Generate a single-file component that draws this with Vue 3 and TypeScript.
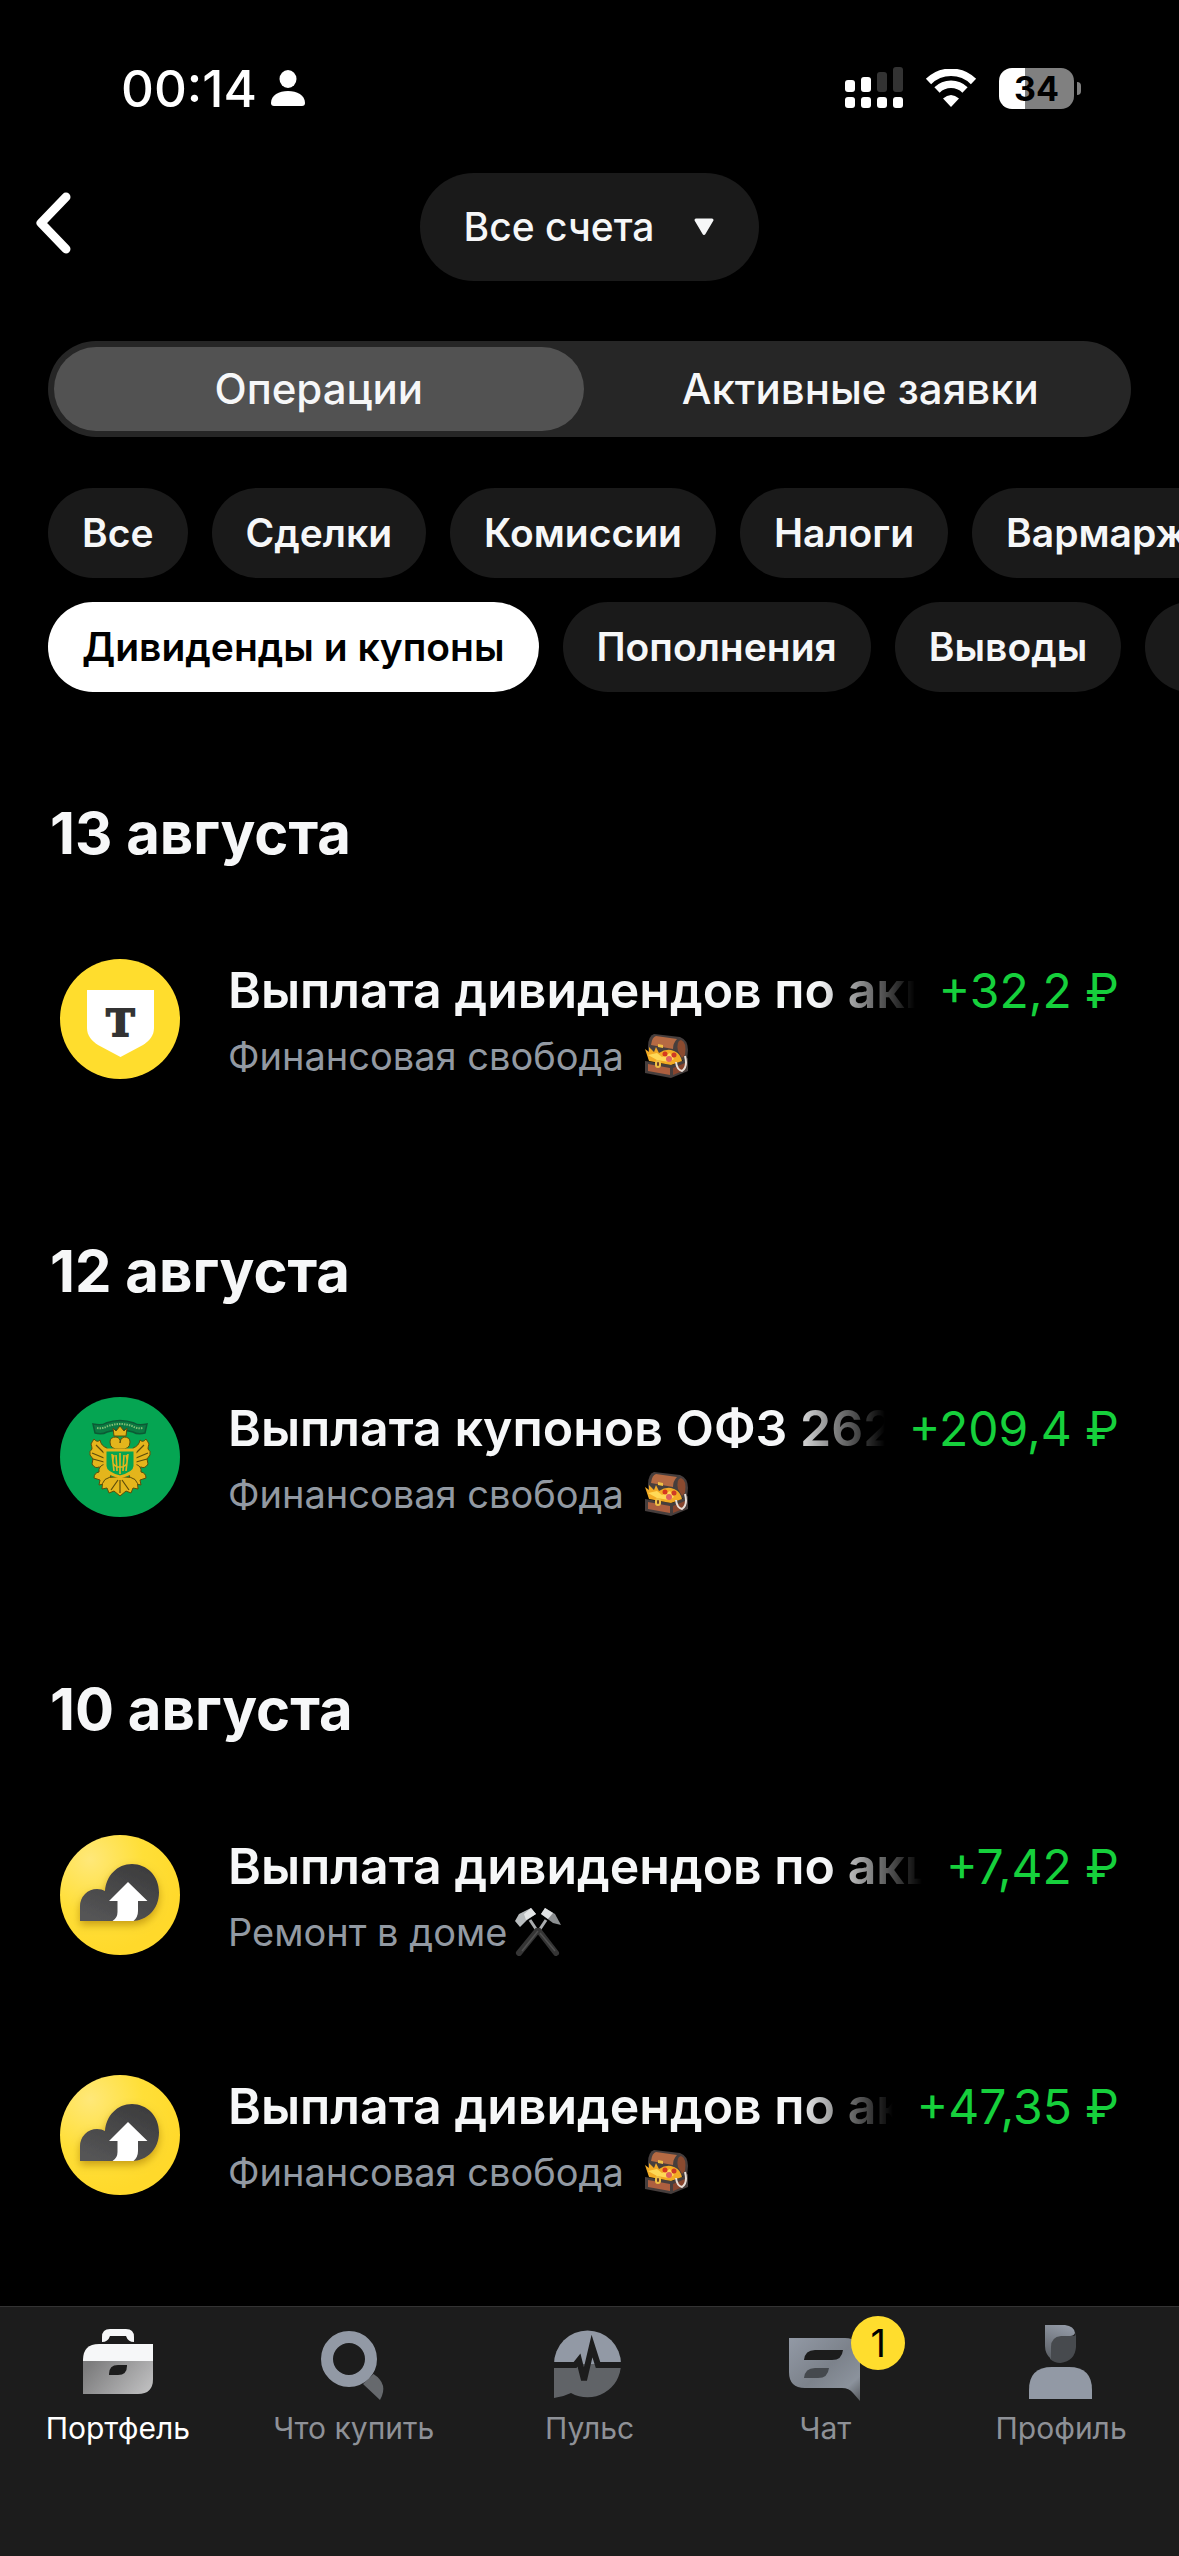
<script setup lang="ts">
import { ref } from 'vue'

type Logo = 'tbank' | 'minfin' | 'cloud'
type Emoji = 'chest' | 'hammers'

interface Operation {
  logo: Logo
  title: string
  account: string
  emoji: Emoji
  amount: string
}

interface Day {
  date: string
  operations: Operation[]
}

const segments = ['Операции', 'Активные заявки']
const activeSegment = ref(segments[0])

const filterRows = [
  ['Все', 'Сделки', 'Комиссии', 'Налоги', 'Вармарж'],
  ['Дивиденды и купоны', 'Пополнения', 'Выводы', ''],
]
const activeFilter = ref('Дивиденды и купоны')

const days: Day[] = [
  {
    date: '13 августа',
    operations: [
      { logo: 'tbank', title: 'Выплата дивидендов по акц', account: 'Финансовая свобода', emoji: 'chest', amount: '+32,2 ₽' },
    ],
  },
  {
    date: '12 августа',
    operations: [
      { logo: 'minfin', title: 'Выплата купонов ОФЗ 262', account: 'Финансовая свобода', emoji: 'chest', amount: '+209,4 ₽' },
    ],
  },
  {
    date: '10 августа',
    operations: [
      { logo: 'cloud', title: 'Выплата дивидендов по акц', account: 'Ремонт в доме', emoji: 'hammers', amount: '+7,42 ₽' },
      { logo: 'cloud', title: 'Выплата дивидендов по ак', account: 'Финансовая свобода', emoji: 'chest', amount: '+47,35 ₽' },
    ],
  },
]
</script>

<template>
  <div class="page">
    <div class="status">
      <div class="status-left">
        <time>00:14</time>
        <svg width="34" height="38" viewBox="0 0 34 38" aria-hidden="true">
          <ellipse cx="17" cy="10" rx="8.5" ry="9" fill="#fff" />
          <path d="M0 34C0 26 8 22 17 22s17 4 17 12q0 3-3 3H3q-3 0-3-3Z" fill="#fff" />
        </svg>
      </div>
      <div class="status-right">
        <svg width="58" height="42" viewBox="0 0 58 42" fill="#fff" aria-hidden="true">
          <rect x="0" y="13" width="10" height="12" rx="3" />
          <rect x="16" y="10" width="10" height="15" rx="3" />
          <rect x="32" y="5" width="10" height="20" rx="3" fill="#333" />
          <rect x="48" y="0" width="10" height="25" rx="3" fill="#333" />
          <rect x="0" y="30" width="10" height="11" rx="3" />
          <rect x="16" y="30" width="10" height="11" rx="3" />
          <rect x="32" y="30" width="10" height="11" rx="3" />
          <rect x="48" y="30" width="10" height="11" rx="3" />
        </svg>
        <svg class="wifi" width="52" height="38" viewBox="0 0 52 38" aria-hidden="true">
          <path d="M3.500 12.500a32 32 0 0 1 45 0" fill="none" stroke="#fff" stroke-width="7.500" />
          <path d="M12 21a20 20 0 0 1 28 0" fill="none" stroke="#fff" stroke-width="7.500" />
          <path d="M26 38l-8-8.500q8-7 16 0Z" fill="#fff" />
        </svg>
        <div class="battery"><span class="battery-level">34</span><i class="battery-tip"></i></div>
      </div>
    </div>

    <header class="header">
      <button class="back" type="button" aria-label="Назад">
        <svg width="36" height="62" viewBox="0 0 36 62" aria-hidden="true">
          <path d="M30 5 5 31l25 26" fill="none" stroke="#fff" stroke-width="9" stroke-linecap="round" stroke-linejoin="round" />
        </svg>
      </button>
      <button class="account" type="button">
        Все счета
        <svg width="22" height="18" viewBox="0 0 22 18" aria-hidden="true">
          <path d="M3 2h16L11 15.500Z" fill="#f6f7f8" stroke="#f6f7f8" stroke-width="3" stroke-linejoin="round" />
        </svg>
      </button>
    </header>

    <main>
      <div class="segments">
        <button
          v-for="segment in segments"
          :key="segment"
          type="button"
          class="segment"
          :class="{ active: segment === activeSegment }"
          :aria-pressed="segment === activeSegment"
          @click="activeSegment = segment"
        >{{ segment }}</button>
      </div>

      <div class="filters">
        <div v-for="(row, index) in filterRows" :key="index" class="filter-row">
          <button
            v-for="filter in row"
            :key="filter"
            type="button"
            class="chip"
            :class="{ active: filter === activeFilter }"
            :aria-pressed="filter === activeFilter"
            :aria-label="filter || 'Ещё'"
            @click="activeFilter = filter"
          >{{ filter }}</button>
        </div>
      </div>

      <div class="days">
        <section v-for="day in days" :key="day.date">
          <h2>{{ day.date }}</h2>
          <ul>
            <li v-for="operation in day.operations" :key="operation.amount" class="operation">
              <svg v-if="operation.logo === 'tbank'" class="logo" viewBox="0 0 120 120" aria-hidden="true">
                <circle cx="60" cy="60" r="60" fill="#ffdd2d" />
                <path d="M27 31h67v38c0 8-5 13-11 17L60.500 98 38 86c-6-4-11-9-11-17Z" fill="#fff" />
                <text x="60.500" y="77" class="logo-letter" text-anchor="middle">Т</text>
              </svg>

              <svg v-else-if="operation.logo === 'minfin'" class="logo" viewBox="0 0 120 120" aria-hidden="true">
                <circle cx="60" cy="60" r="60" fill="#05a552" />
                <path d="M33 27q9 2 13-1 14-5 28 0 4 3 13 1l-2 9q-7 2-12-1-13-4-26 0-5 3-12 1Z" fill="#0b7a42" stroke="#0c5a35" stroke-width="1.500" />
                <path d="M37 31q6 1 11-2 12-4 24 0 5 3 11 2" fill="none" stroke="#7dbb72" stroke-width="2" stroke-dasharray="1.500 1" />
                <g fill="#e4b51c" stroke="#5c4d0b" stroke-width="1">
                  <path d="M53 31l3 3 4-5 4 5 3-3-1 8H54Z" />
                  <path d="M60 52q-10 1-10-7 0-5 6-5 5 1 4 6 0-5 4-6 6 0 6 5 0 8-10 7Z" />
                  <path d="M47 51q-6-2-7-8-3 3-6-1-2 3-3 5 1 3 1 5-3 2-2 6l3 4-1 5q3 5 7 3l6 2Z" />
                  <path d="M73 51q6-2 7-8 3 3 6-1 2 3 3 5-1 3-1 5 3 2 2 6l-3 4 1 5q-3 5-7 3l-6 2Z" />
                  <path d="M45 67q-7 2-6 8-5 1-5 6l6 2-1 5 9-2 3-8Z" />
                  <path d="M75 67q7 2 6 8 5 1 5 6l-6 2 1 5-9-2-3-8Z" />
                  <path d="M56 80q-15-1-14 12l5-1 2 5 5-2 6 5 6-5 5 2 2-5 5 1q1-13-14-12Z" />
                </g>
                <path d="M32 56l12 5M33 62l11 3M36 48l8 8M88 56l-12 5M87 62l-11 3M84 48l-8 8M60 96V83M51 93l7-10M69 93l-7-10" stroke="#5c4d0b" stroke-width="1.200" />
                <path d="M45 53h30v16q0 7-15 11-15-4-15-11Z" fill="#05a552" stroke="#e4b51c" stroke-width="3" />
                <path d="M60 56v21M54 74l-2-17M66 74l2-17M54 58q-4 12 6 12 10 0 6-12M57 74l-1-16M63 74l1-16" fill="none" stroke="#e4b51c" stroke-width="1.600" />
              </svg>

              <svg v-else class="logo" viewBox="0 0 120 120" aria-hidden="true">
                <defs>
                  <radialGradient id="cloud-bg" cx="0.25" cy="0.2" r="0.8">
                    <stop offset="0" stop-color="#ffe879" />
                    <stop offset="0.55" stop-color="#ffdf38" />
                    <stop offset="1" stop-color="#ffd92b" />
                  </radialGradient>
                  <linearGradient id="cloud-fill" x1="0.8" y1="0" x2="0.2" y2="1">
                    <stop offset="0" stop-color="#3c3c3d" />
                    <stop offset="1" stop-color="#555556" />
                  </linearGradient>
                  <filter id="cloud-shadow" x="-20%" y="-20%" width="140%" height="150%">
                    <feDropShadow dx="0" dy="4" stdDeviation="4" flood-color="#a27500" flood-opacity="0.6" />
                  </filter>
                </defs>
                <circle cx="60" cy="60" r="60" fill="url(#cloud-bg)" />
                <path d="M20 86V71a17 17 0 0 1 17-17q5 0 8 2c1-15 12-27 27-27 15 0 27 12 27 28.500S87 86 72 86Z" fill="url(#cloud-fill)" filter="url(#cloud-shadow)" />
                <path d="M68 47l19.500 19H78v10q0 6-4.500 10h-21q5-3 5-9V66H49Z" fill="#fff" />
              </svg>

              <div class="details">
                <div class="summary">
                  <span class="title">{{ operation.title }}</span>
                  <span class="amount">{{ operation.amount }}</span>
                </div>
                <div class="account-name">
                  {{ operation.account }}
                  <svg v-if="operation.emoji === 'chest'" class="chest" viewBox="0 0 44 44" role="img" aria-label="Сундук">
                    <path d="M3 13Q3 2 9 0l26 3q8 3 8 13l-1 10H4Z" fill="#463e3d" />
                    <path d="M6 11q1-8 5-9l21 3q-4 4-4 10Z" fill="#b56a43" />
                    <path d="M33 17q-2-10 3-11 6 2 4 15l-3 3Z" fill="#8a4a2f" />
                    <path d="M0 27l27 4 16-7v13l-17 7-26-5Z" fill="#463e3d" />
                    <path d="M3 30l22 4v7L3 37Z" fill="#ad5f3f" />
                    <path d="M28 34l12-5v7l-12 5Z" fill="#87452e" />
                    <path d="M0 15l4 3 0-5 5 5 2-5 3 6q6-4 12-3 8 2 10 8l1 3-11 4-22-4Z" fill="#f3ab25" />
                    <path d="M3 21l9-2 5 4 8-4 4 6-5 3-12-2Z" fill="#ffd957" />
                    <circle cx="20" cy="20" r="2.500" fill="#d7381e" />
                    <circle cx="29" cy="21" r="2.500" fill="#cf3a25" />
                    <circle cx="24" cy="25" r="3" fill="#e0625f" />
                    <path d="M40 22q3 11-3 15-5-1-6-9" fill="none" stroke="#e8dfd8" stroke-width="2" />
                    <rect x="11" y="27" width="4" height="6" rx="2" fill="#6b3d28" stroke="#efc045" stroke-width="2" />
                    <path d="M13 10l5 1v3l-5-1Z" fill="#efc045" />
                  </svg>
                  <svg v-else class="hammers" viewBox="0 0 48 48" role="img" aria-label="Молоты">
                    <path d="M16 12l8 12M32 12l-8 12" stroke="#a9acae" stroke-width="3" />
                    <path d="M23 23 5 45M25 23l17 22" stroke="#353535" stroke-width="6" stroke-linecap="round" />
                    <path d="M24 23 8 43M26 25l15 18" stroke="#505050" stroke-width="1.500" />
                    <path d="M17 0l5 6-9 6-7 7-5-6 4-7Z" fill="#b8bcbe" />
                    <path d="M17 0l5 6-10 6-2-6Z" fill="#e3e5e6" />
                    <path d="M31 0l10 6 6 11-8-2-12-9Z" fill="#8c8f91" />
                    <path d="M31 0l8 5-5 6-7-5Z" fill="#e0e2e3" />
                  </svg>
                </div>
              </div>
            </li>
          </ul>
        </section>
      </div>
    </main>

    <nav class="tabs">
      <a href="#portfolio" class="tab current" aria-current="page">
        <svg class="tab-icon" viewBox="0 0 72 78" aria-hidden="true">
          <defs>
            <linearGradient id="case-fill" x1="0" y1="0.3" x2="1" y2="0.7">
              <stop offset="0" stop-color="#7c7c7d" />
              <stop offset="1" stop-color="#bdbdbe" />
            </linearGradient>
          </defs>
          <path d="M20 18v-5q0-8 8-8h16q8 0 8 8v5q-6 0-8-6H28q-2 6-8 6Z" fill="#f6f7f8" />
          <path d="M1 37v-1Q1 20 17 20h54v17Z" fill="#f6f7f8" />
          <path d="M1 37h70v18q0 15-15 15H1Z" fill="url(#case-fill)" />
          <path d="M27 51v-1q0-9 9-9h9v1q0 9-9 9Z" fill="#1c1c1c" />
        </svg>
        Портфель
      </a>
      <a href="#buy" class="tab">
        <svg class="tab-icon" viewBox="0 0 72 78" aria-hidden="true">
          <path d="M45 60 55.500 50Q71 60 62 76Z" fill="#66696d" />
          <circle cx="31" cy="35" r="22" fill="none" stroke="#9299a5" stroke-width="12" />
        </svg>
        Что купить
      </a>
      <a href="#pulse" class="tab">
        <svg class="tab-icon" viewBox="0 0 72 78" aria-hidden="true">
          <path d="M1 40a33.500 33.500 0 0 1 67 0Z" fill="#9299a5" />
          <path d="M1 40h67a33.500 33.500 0 0 1-50 29q-8 4-17 5Z" fill="#606367" />
          <path d="M0 41h22l4-5 5 20 8-34 6 19h25" fill="none" stroke="#1c1c1c" stroke-width="6" />
        </svg>
        Пульс
      </a>
      <a href="#chat" class="tab">
        <span class="badge-anchor">
          <svg class="tab-icon" viewBox="0 0 72 78" aria-hidden="true">
            <defs>
              <linearGradient id="chat-fill" x1="0" y1="0" x2="1" y2="1">
                <stop offset="0" stop-color="#9299a5" />
                <stop offset="0.5" stop-color="#7c828b" />
                <stop offset="0.8" stop-color="#8b929c" />
                <stop offset="1" stop-color="#55585c" />
              </linearGradient>
            </defs>
            <path d="M0 14h56q15 0 15 15v48l-7-8q-4-5-11-5H16Q0 64 0 48Z" fill="url(#chat-fill)" />
            <path d="M15 36q1-10 11-10h28q-1 10-11 10Z" fill="#1c1c1c" />
            <path d="M15 54q1-10 11-10h14q-1 10-11 10Z" fill="#45494e" />
          </svg>
          <span class="badge">1</span>
        </span>
        Чат
      </a>
      <a href="#profile" class="tab">
        <svg class="tab-icon" viewBox="0 0 72 78" aria-hidden="true">
          <defs>
            <linearGradient id="hair-fill" x1="0.6" y1="0" x2="0.3" y2="1">
              <stop offset="0" stop-color="#9299a5" />
              <stop offset="1" stop-color="#5c6066" />
            </linearGradient>
          </defs>
          <path d="M25 35V17q2-5 8-5h16q2-1 2-4v15q-1 14-15.500 16-6 0-10.500-4Z" fill="#474a4e" />
          <path d="M20 1h20q9 1 10 8-1 3-5 3H36q-10 1-10 11v12q-6-5-6-13Z" fill="url(#hair-fill)" />
          <path d="M4 75V66Q4 43 27 43h17q23 0 23 23v9Z" fill="#9299a5" />
        </svg>
        Профиль
      </a>
    </nav>
  </div>
</template>

<style>
body {
  margin: 0;
  background: #000;
}
</style>

<style scoped>
.page {
  display: flex;
  flex-direction: column;
  min-height: 100vh;
  overflow: hidden;
  background: #000;
  color: #f6f7f8;
  font-family: Inter, 'Noto Sans', sans-serif;
}

svg {
  display: block;
  flex: none;
}

button {
  padding: 0;
  border: 0;
  background: none;
  color: inherit;
  font: inherit;
}

.status {
  display: flex;
  justify-content: space-between;
  padding: 56px 98px 53px 121px;
}

.status-left,
.status-right {
  display: flex;
  align-items: center;
  height: 64px;
}

.status-left {
  gap: 14px;
  color: #fff;
  font-size: 51px;
  font-weight: 500;
}

.status-right {
  gap: 22px;
}

.battery {
  display: flex;
  align-items: center;
  gap: 3px;
}

.battery-level {
  width: 75px;
  border-radius: 13px;
  background: linear-gradient(to right, #fff 26px, #808080 26px);
  color: #000;
  font-size: 34px;
  font-weight: 700;
  line-height: 41px;
  text-align: center;
}

.battery-tip {
  width: 4px;
  height: 13px;
  border-radius: 0 4px 4px 0;
  background: #808080;
}

.header {
  display: grid;
  grid-template-columns: 1fr auto 1fr;
  align-items: center;
  padding: 0 36px;
}

.back {
  justify-self: start;
  padding-bottom: 8px;
}

.account {
  display: flex;
  align-items: center;
  gap: 39px;
  padding: 0 44px;
  border-radius: 54px;
  background: #1a1a1a;
  font-size: 39px;
  font-weight: 500;
  line-height: 108px;
}

.segments {
  display: grid;
  grid-template-columns: 1fr 1fr;
  margin: 60px 48px 0;
  padding: 6px 0;
  border-radius: 48px;
  background: #262626;
}

.segment {
  margin: 0 6px;
  border-radius: 42px;
  font-size: 42px;
  font-weight: 500;
  line-height: 84px;
}

.segment.active {
  background: #525252;
}

.filters {
  display: grid;
  grid-template-columns: minmax(0, 1fr);
  gap: 24px;
  margin-top: 51px;
  padding-left: 48px;
}

.filter-row {
  display: flex;
  gap: 24px;
  overflow: hidden;
}

.chip {
  flex: none;
  min-width: 90px;
  padding: 0 34px;
  border-radius: 45px;
  background: #1a1a1a;
  font-size: 39px;
  font-weight: 600;
  line-height: 90px;
}

.chip.active {
  background: #fff;
  color: #000;
}

.days {
  display: grid;
  grid-template-columns: minmax(0, 1fr);
  gap: 96px;
  margin-top: 105px;
}

h2 {
  margin: 0 50px 30px;
  font-size: 58px;
  font-weight: 700;
  line-height: 72px;
}

ul {
  margin: 0;
  padding: 0;
  list-style: none;
}

.operation {
  display: flex;
  align-items: center;
  gap: 48px;
  height: 240px;
  padding: 0 60px;
}

.logo {
  width: 120px;
  height: 120px;
}

.logo-letter {
  fill: #333;
  stroke: #333;
  stroke-width: 2px;
  font-family: 'DejaVu Serif', serif;
  font-size: 38px;
  font-weight: 700;
}

.details {
  flex: 1;
  min-width: 0;
  padding-top: 2px;
}

.summary {
  display: flex;
  align-items: baseline;
  gap: 24px;
  margin-bottom: 10px;
  line-height: 60px;
  white-space: nowrap;
}

.title {
  flex: 1;
  min-width: 0;
  overflow: clip;
  font-size: 50px;
  font-weight: 600;
  -webkit-mask-image: linear-gradient(to right, #000 calc(100% - 96px), transparent);
  mask-image: linear-gradient(to right, #000 calc(100% - 96px), transparent);
}

.amount {
  color: #16d03c;
  font-size: 48px;
}

.account-name {
  display: flex;
  align-items: center;
  color: #9299a2;
  font-size: 38px;
  line-height: 50px;
}

.chest {
  width: 44px;
  height: 44px;
  margin-left: 21px;
}

.hammers {
  width: 48px;
  height: 48px;
  margin-left: 7px;
}

.tabs {
  display: flex;
  margin-top: auto;
  padding: 17px 0 110px;
  border-top: 1px solid #333;
  background: #1c1c1c;
}

.tab {
  display: flex;
  flex: 1;
  flex-direction: column;
  align-items: center;
  gap: 8px;
  color: #8e9197;
  font-size: 30px;
  line-height: 36px;
  text-decoration: none;
}

.tab.current {
  color: #fff;
}

.tab-icon {
  width: 72px;
  height: 78px;
}

.badge-anchor {
  position: relative;
}

.badge {
  position: absolute;
  top: -8px;
  left: 62px;
  width: 54px;
  border-radius: 27px;
  background: #ffdd2d;
  color: #000;
  font-size: 38px;
  line-height: 54px;
  text-align: center;
}
</style>
